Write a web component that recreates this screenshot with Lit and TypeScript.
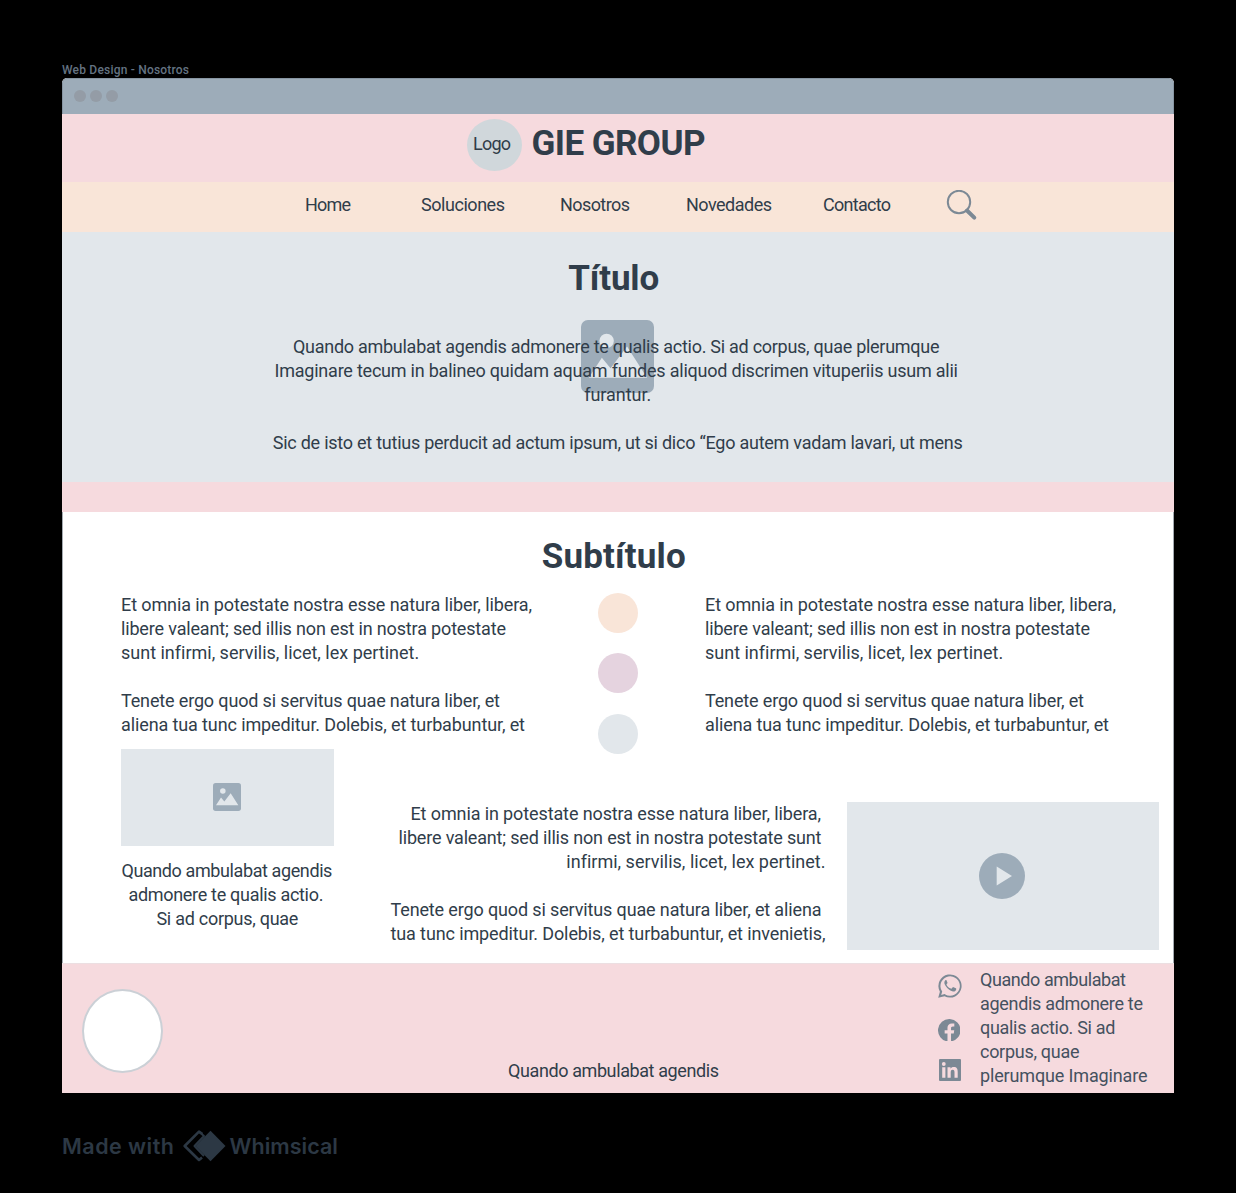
import { LitElement, html, css, svg } from "lit";
import { customElement, property } from "lit/decorators.js";

type Line = { text: string; width: number; shift?: number };

const L = (text: string, width: number, shift = 0): Line => ({ text, width, shift });

/** One line of text whose tracking is adjusted so that it fills a given width. */
@customElement("fit-line")
class FitLine extends LitElement {
  @property() text = "";
  @property({ type: Number }) width = 0;

  static styles = css`
    :host { display: block; white-space: pre; }
    .run { display: inline-block; white-space: pre; }
  `;

  updated() {
    const run = this.renderRoot.querySelector(".run") as HTMLElement;
    if (!this.width || !this.text) return;
    run.style.letterSpacing = "0px";
    const natural = run.getBoundingClientRect().width;
    const step = (this.width - natural) / (this.text.length - 1);
    run.style.letterSpacing = `${step}px`;
    run.style.marginRight = `${-step}px`;
  }

  render() {
    return html`<span class="run">${this.text || " "}</span>`;
  }
}

@customElement("text-block")
class TextBlock extends LitElement {
  @property({ attribute: false }) lines: Line[] = [];

  static styles = css`
    :host { display: flex; flex-direction: column; }
    .line { height: 24px; line-height: 24px; }
  `;

  render() {
    return this.lines.map(
      (l) => html`<fit-line class="line" .text=${l.text} .width=${l.width}
        style="margin-right:${l.shift ?? 0}px"></fit-line>`
    );
  }
}

const nav = [
  L("Home", 46), L("Soluciones", 84), L("Nosotros", 70), L("Novedades", 86), L("Contacto", 68),
];

const hero = [
  L("Quando ambulabat agendis admonere te qualis actio. Si ad corpus, quae plerumque", 646.5, 3),
  L("Imaginare tecum in balineo quidam aquam fundes aliquod discrimen vituperiis usum alii", 683.5, 3),
  L("furantur.", 67, 0),
  L("", 0),
  L("Sic de isto et tutius perducit ad actum ipsum, ut si dico “Ego autem vadam lavari, ut mens", 690, 0),
];

const column = [
  L("Et omnia in potestate nostra esse natura liber, libera,", 411),
  L("libere valeant; sed illis non est in nostra potestate", 385),
  L("sunt infirmi, servilis, licet, lex pertinet.", 297.5),
  L("", 0),
  L("Tenete ergo quod si servitus quae natura liber, et", 379),
  L("aliena tua tunc impeditur. Dolebis, et turbabuntur, et", 404),
];

const caption = [
  L("Quando ambulabat agendis", 211, 1),
  L("admonere te qualis actio.", 195, 3),
  L("Si ad corpus, quae", 142, 0),
];

const detail = [
  L("Et omnia in potestate nostra esse natura liber, libera,", 410.5, 4.5),
  L("libere valeant; sed illis non est in nostra potestate sunt", 423, 4),
  L("infirmi, servilis, licet, lex pertinet.", 258.5, 0),
  L("", 0),
  L("Tenete ergo quod si servitus quae natura liber, et aliena", 431, 4),
  L("tua tunc impeditur. Dolebis, et turbabuntur, et invenietis,", 435, 0),
];

const contact = [
  L("Quando ambulabat", 146), L("agendis admonere te", 163), L("qualis actio. Si ad", 135.5),
  L("corpus, quae", 99.5), L("plerumque Imaginare", 167.5),
];

const pictureIcon = svg`
  <rect width="84" height="84" rx="8" fill="#9dacb9"/>
  <circle cx="29.500" cy="24" r="8.300" fill="#e2e7eb"/>
  <path d="M9 66.500 24 43.500 34 55.500 53 30.500 76 66.500Z" fill="#e2e7eb"/>`;

@customElement("app-root")
class AppRoot extends LitElement {
  static styles = css`
    :host {
      display: block; box-sizing: border-box; width: 1236px; height: 1193px; padding: 63px 62px 0;
      background: #000; color: #303d4a; overflow: hidden;
      font-family: Roboto, "Liberation Sans", sans-serif; font-size: 18px; line-height: 24px;
    }
    * { box-sizing: border-box; }
    svg { display: block; flex: none; }
    .label { height: 15px; line-height: 15px; font-size: 12px; font-weight: 500; color: #647382; }
    .window { width: 1111.5px; border-radius: 5px 5px 0 0; overflow: hidden; background: #fff; }
    .bar { height: 36px; background: #9dacb9; border: 1px solid #8795a2; border-bottom: 0;
      border-radius: 5px 5px 0 0; display: flex; align-items: center; gap: 4px; padding: 0 0 1px 11px; }
    .dot { width: 12px; height: 12px; border-radius: 50%; background: #949ca6; }
    .brand { height: 68px; background: #f6dade; display: flex; padding: 4.500px 0 0 404.500px; gap: 10px; }
    .logo { width: 55px; height: 52px; border-radius: 50%; background: #d0d7db;
      padding: 13.500px 0 0 6.500px; }
    .name { font-size: 35px; font-weight: 700; line-height: 40px; padding-top: 5.500px; }
    .nav { height: 50px; background: #f9e5d8; display: grid; padding: 11px 0 0 243px;
      grid-template-columns: 116px 139px 126px 137px 123px 40px; align-items: start; }
    .search { margin-top: -3px; }
    .hero { height: 250px; background: #e2e7eb; padding-top: 27px; position: relative; }
    .title { font-size: 35px; font-weight: 700; line-height: 40px; text-align: center;
      padding-right: 8px; }
    .subtitle { padding-right: 52px; }
    .hero-icon { position: absolute; left: 519px; top: 88px; }
    .hero-text { position: relative; margin-top: 36px; text-align: center; }
    .band { height: 30px; background: #f6dade; }
    .content { height: 451px; border: 1px solid #a3a9af; border-width: 0 1px 0; padding: 25px 14px 0 58px; }
    .columns { display: grid; grid-template-columns: 477px 107px 412px; height: 156px; margin-top: 16px; }
    .swatches { display: flex; flex-direction: column; gap: 20.400px; }
    .swatch { width: 40px; height: 40px; border-radius: 50%; flex: none; }
    .peach { background: #f9e5d8; }
    .mauve { background: #e5d3df; }
    .gray { background: #e2e7eb; }
    .media { display: flex; }
    .figure { width: 213px; text-align: center; }
    .thumb { height: 97px; background: #e2e7eb; display: flex; align-items: center;
      justify-content: center; margin-bottom: 13px; padding: 0 1px 2px 0; }
    .detail { width: 436px; margin: 53px 21px 0 56px; text-align: right; }
    .video { width: 312px; height: 148px; margin-top: 53px; background: #e2e7eb; display: flex;
      align-items: center; justify-content: center; padding: 0 1px 1px 0; flex: none; }
    .footer { height: 130px; background: #f6dade; display: flex; border-top: 1px solid #ecdfe2; }
    .avatar { width: 81px; height: 84px; margin: 25px 0 0 20px; border-radius: 50%;
      background: #fff; border: 2px solid #cbd0d6; }
    .tagline { margin: 95px 0 0 345px; width: 211px; }
    .social { width: 24px; margin: 9.500px 0 0 218.500px; display: flex; flex-direction: column; }
    .fb { margin: 21px 0 18px 0; }
    .li { margin-left: 1px; }
    .contact { margin: 4px 0 0 18.500px; color: #45515f; }
    .credit { display: flex; align-items: center; margin-top: 37px; height: 32px; color: #2c3844;
      font-family: Inter, sans-serif; font-size: 21.500px; font-weight: 600; line-height: 32px; }
    .mark { margin: 0 3.500px 0 9px; }
  `;

  render() {
    return html`
      <fit-line class="label" text="Web Design - Nosotros" width="127"></fit-line>
      <div class="window">
        <div class="bar"><i class="dot"></i><i class="dot"></i><i class="dot"></i></div>
        <div class="brand">
          <div class="logo"><fit-line text="Logo" width="38"></fit-line></div>
          <fit-line class="name" text="GIE GROUP" width="174"></fit-line>
        </div>
        <div class="nav">
          ${nav.map((n) => html`<fit-line .text=${n.text} .width=${n.width}></fit-line>`)}
          <svg class="search" width="32" height="32" viewBox="0 0 32 32" fill="none" stroke="#7c8995">
            <circle cx="13" cy="12" r="11.200" stroke-width="2"/>
            <path d="M21 20.500 28.300 27.700" stroke-width="4" stroke-linecap="round"/>
          </svg>
        </div>
        <div class="hero">
          <svg class="hero-icon" width="73" height="73" viewBox="0 0 84 84">${pictureIcon}</svg>
          <fit-line class="title" text="Título" width="91"></fit-line>
          <text-block class="hero-text" .lines=${hero}></text-block>
        </div>
        <div class="band"></div>
        <div class="content">
          <fit-line class="title subtitle" text="Subtítulo" width="144"></fit-line>
          <div class="columns">
            <text-block .lines=${column}></text-block>
            <div class="swatches">
              <div class="swatch peach"></div><div class="swatch mauve"></div><div class="swatch gray"></div>
            </div>
            <text-block .lines=${column}></text-block>
          </div>
          <div class="media">
            <div class="figure">
              <div class="thumb"><svg width="28" height="28" viewBox="0 0 84 84">${pictureIcon}</svg></div>
              <text-block .lines=${caption}></text-block>
            </div>
            <text-block class="detail" .lines=${detail}></text-block>
            <div class="video">
              <svg width="46" height="46" viewBox="0 0 46 46">
                <circle cx="23" cy="23" r="23" fill="#9dacb9"/>
                <path d="M17.700 13.500v19L33 23Z" fill="#e2e7eb"/>
              </svg>
            </div>
          </div>
        </div>
        <div class="footer">
          <div class="avatar"></div>
          <fit-line class="tagline" text="Quando ambulabat agendis" width="211"></fit-line>
          <div class="social">
            <svg width="24" height="24" viewBox="0 0 24 24" fill="#7c8995">
              <path fill-rule="evenodd" d="M.2 23.800 1.900 17.700A11.600 11.600 0 1 1 6.500 22.200ZM6.800 20.100l.5.300A9.700 9.700 0 1 0 3.900 17.100l.3.500-1 3.500Z"/>
              <path d="M8.600 6.400c-.3-.6-.9-.6-1.300-.1-1.500 1.600-1.100 3.600.2 5.500 2.200 3.200 4.500 4.900 7.500 5.600 1.400.3 3-.7 3.200-2 .1-.5.100-.9-.3-1.100l-2.400-1.100c-.4-.2-.7-.1-.9.200l-.9 1.100c-.2.300-.5.300-.9.100-1.900-.8-3.200-2-4.200-3.700-.2-.3-.1-.5.100-.8.300-.4.900-.9.800-1.400Z"/>
            </svg>
            <svg class="fb" width="22.500" height="22.500" viewBox="0 0 24 24" fill="#7c8995">
              <path d="M24 12a12 12 0 1 0-13.900 11.900v-8.400H7.100V12h3V9.400c0-3 1.800-4.700 4.600-4.700 1.300 0 2.700.2 2.700.2v3h-1.500c-1.500 0-2 .9-2 1.900V12h3.400l-.5 3.500h-2.900v8.400A12 12 0 0 0 24 12Z"/>
            </svg>
            <svg class="li" width="22" height="22" viewBox="0 0 22 22">
              <rect width="22" height="22" rx="1" fill="#7c8995"/>
              <circle cx="4.800" cy="5" r="1.900" fill="#f6dade"/>
              <path d="M3.200 8.300h3.200V18.700H3.200ZM8.500 8.300h3v1.500c.6-1 1.700-1.700 3.200-1.700 3.300 0 4 2.100 4 4.900v5.700h-3.200v-5.100c0-1.300-.1-2.800-1.800-2.800s-2 1.300-2 2.700v5.200H8.500Z" fill="#f6dade"/>
            </svg>
          </div>
          <text-block class="contact" .lines=${contact}></text-block>
        </div>
      </div>
      <div class="credit">
        <fit-line text="Made with" width="112"></fit-line>
        <svg class="mark" width="43" height="32" viewBox="0 0 43 32">
          <path d="M19.500 4 16 1.700 1.700 16 16 30 19 27.500" fill="none" stroke="#2c3844" stroke-width="2.600" stroke-linejoin="round"/>
          <path d="M16 1.700 21 6 11.500 16 21 26" fill="none" stroke="#2c3844" stroke-width="2" stroke-linejoin="round"/>
          <path d="M27.500.800 42.500 16 27.500 31.200 12.500 16Z" fill="#2c3844"/>
        </svg>
        <fit-line text="Whimsical" width="108.500"></fit-line>
      </div>
    `;
  }
}
